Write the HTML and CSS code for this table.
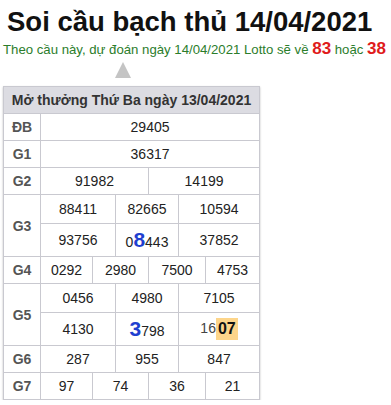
FILE: index.html
```html
<!DOCTYPE html>
<html lang="vi">
<head>
<meta charset="utf-8">
<link rel="stylesheet" href="styles.css">
</head>
<body>
<h1 class="title">Soi cầu bạch thủ 14/04/2021</h1>
<p class="predict">Theo cầu này, dự đoán ngày 14/04/2021 Lotto sẽ về <b class="hot">83</b> hoặc <b class="hot">38</b></p>
<div class="arrow"></div>
<table class="kq">
  <colgroup>
    <col class="c0"><col class="c1"><col class="c2"><col class="c3"><col class="c4"><col class="c5"><col class="c6">
  </colgroup>
  <tr><th colspan="7" class="head">Mở thưởng Thứ Ba ngày 13/04/2021</th></tr>
  <tr><td class="lbl">ĐB</td><td colspan="6">29405</td></tr>
  <tr><td class="lbl">G1</td><td colspan="6">36317</td></tr>
  <tr><td class="lbl">G2</td><td colspan="3">91982</td><td colspan="3">14199</td></tr>
  <tr class="r-a"><td class="lbl" rowspan="2">G3</td><td colspan="2">88411</td><td colspan="2">82665</td><td colspan="2">10594</td></tr>
  <tr class="r-big"><td colspan="2">93756</td><td colspan="2">0<b class="mark">8</b>443</td><td colspan="2">37852</td></tr>
  <tr><td class="lbl">G4</td><td>0292</td><td colspan="2">2980</td><td colspan="2">7500</td><td>4753</td></tr>
  <tr class="r-a"><td class="lbl" rowspan="2">G5</td><td colspan="2">0456</td><td colspan="2">4980</td><td colspan="2">7105</td></tr>
  <tr class="r-big"><td colspan="2">4130</td><td colspan="2"><b class="mark">3</b>798</td><td colspan="2"><span class="dim">16</span><b class="loto">07</b></td></tr>
  <tr><td class="lbl">G6</td><td colspan="2">287</td><td colspan="2">955</td><td colspan="2">847</td></tr>
  <tr><td class="lbl">G7</td><td>97</td><td colspan="2">74</td><td colspan="2">36</td><td>21</td></tr>
</table>
</body>
</html>
```
FILE: styles.css
```css
html, body {
  margin: 0;
  padding: 0;
  background: #fff;
}
body {
  padding: 0 3px;
  font-family: "Liberation Sans", Arial, sans-serif;
  color: #222;
}
.title {
  margin: 0;
  padding: 6px 0 0 4px;
  font-size: 27.5px;
  line-height: 32px;
  font-weight: bold;
  color: #111;
  white-space: nowrap;
}
.predict {
  margin: 0;
  height: 22px;
  line-height: 22px;
  font-size: 13.2px;
  color: #2b7d2b;
  white-space: nowrap;
}
.hot {
  color: #e01b1b;
  font-size: 17px;
}
.arrow {
  width: 0;
  height: 0;
  margin: 2px 0 0 112px;
  border-left: 8px solid transparent;
  border-right: 8px solid transparent;
  border-bottom: 16px solid #c4c4c4;
}
.kq {
  margin-top: 8px;
  width: 256px;
  table-layout: fixed;
  border-collapse: collapse;
  box-shadow: 0 1px 2px rgba(0,0,0,0.25);
}
.c0 { width: 37px; }
.c1 { width: 52px; }
.c2 { width: 23px; }
.c3 { width: 33px; }
.c4 { width: 30px; }
.c5 { width: 27px; }
.c6 { width: 54px; }
.kq th, .kq td {
  border: 1px solid #c9c9d0;
  padding: 0;
  height: 26px;
  text-align: center;
  vertical-align: middle;
  font-size: 14px;
  line-height: 16px;
  white-space: nowrap;
}
.kq .head {
  background: #dcdce2;
  color: #333;
  font-weight: bold;
  font-size: 14px;
  height: 26px;
}
.kq .lbl {
  font-weight: bold;
  color: #555;
}
.r-a td { height: 28px; }
.r-big td { height: 32px; }
.mark {
  color: #1f3fd0;
  font-size: 21px;
  line-height: 20px;
}
.dim { color: #444; }
.loto {
  display: inline-block;
  background: #fdd58a;
  color: #111;
  font-size: 16px;
  line-height: 22px;
  padding: 0 2px;
  vertical-align: middle;
}
```
